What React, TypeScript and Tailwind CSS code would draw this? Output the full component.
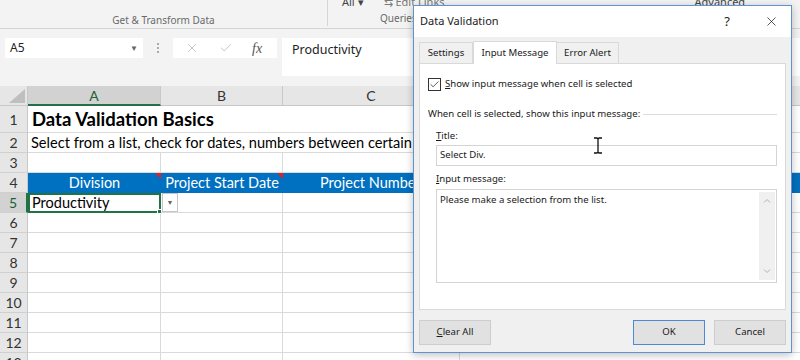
import { X, Check } from "lucide-react";

const ROWS = [1, 2, 3, 4, 5, 6, 7, 8, 9, 10, 11, 12, 13];
const rowH = (n: number) => (n === 1 ? "h-[27px]" : "h-[20px]");
const cellFont = "font-['Lato','Liberation_Sans',sans-serif]";
const ui = "font-['Noto_Sans','Liberation_Sans',sans-serif]";

function Ribbon() {
  return (
    <div className="relative h-[29px] bg-[#f3f3f3] border-b border-[#d4d4d4] flex">
      <div className="w-[328px] border-r border-[#d6d6d6] mb-[2px] flex justify-center pt-[14px]">
        <span className={`${ui} text-[10px] leading-[12px] text-[#6a6a6a]`}>Get &amp; Transform Data</span>
      </div>
      <div className="flex-1 flex flex-col pl-[14px]">
        <div className="flex items-start gap-[20px] h-[10px] -mt-[6px]">
          <span className={`${ui} text-[11px] text-[#444]`}>All ▾</span>
          <span className={`${ui} text-[11px] text-[#777]`}>⇆ Edit Links</span>
          <span className={`${ui} text-[11px] text-[#444] ml-[230px]`}>Advanced</span>
        </div>
        <span className={`${ui} text-[10px] leading-[12px] text-[#6a6a6a] ml-[38px] mt-[8px]`}>Queries &amp; Connections</span>
      </div>
    </div>
  );
}

function FormulaBar() {
  return (
    <div className="h-[57px] bg-[#f3f3f3] flex items-start pt-[9px] pl-[5px]">
      <div className="w-[138px] h-[20px] bg-white flex items-center justify-between px-[5px]">
        <span className={`${ui} text-[12px] text-[#222]`}>A5</span>
        <span className="text-[8px] text-[#666]">▼</span>
      </div>
      <div className="w-[30px] h-[20px] flex flex-col items-center justify-center gap-[2px]">
        <span className="w-[2px] h-[2px] bg-[#aaa]" />
        <span className="w-[2px] h-[2px] bg-[#aaa]" />
        <span className="w-[2px] h-[2px] bg-[#aaa]" />
      </div>
      <div className="w-[104px] h-[20px] bg-white flex items-center">
        <X size={14} strokeWidth={1.3} className="text-[#b3b3b3] ml-[12px]" />
        <Check size={14} strokeWidth={1.3} className="text-[#b3b3b3] ml-[20px]" />
        <span className="ml-[19px] font-['Liberation_Serif',serif] italic text-[14px] text-[#555]">fx</span>
      </div>
      <div className="ml-[5px] flex-1 h-[38px] bg-white pl-[10px] leading-[20px]">
        <span className={`${ui} text-[12.5px] text-[#222]`}>Productivity</span>
      </div>
    </div>
  );
}

function Sheet() {
  return (
    <div className={`${cellFont} grid grid-cols-[28px_133px_122px_177px_1fr]`}>
      {/* header row */}
      <div className="h-[20px] bg-[#e6e6e6] border-r border-b border-[#c8c8c8] relative overflow-hidden">
        <div className="absolute right-[2px] bottom-[2px] w-0 h-0 border-l-[16px] border-l-transparent border-b-[14px] border-b-[#bfbfbf]" />
      </div>
      <div className="h-[20px] bg-[#d2d2d2] border-r border-[#c8c8c8] border-b-2 border-b-[#217346] flex items-center justify-center text-[14px] text-[#1e5e3a]">A</div>
      <div className="h-[20px] bg-[#e6e6e6] border-r border-b border-[#c8c8c8] flex items-center justify-center text-[14px] text-[#333]">B</div>
      <div className="h-[20px] bg-[#e6e6e6] border-r border-b border-[#c8c8c8] flex items-center justify-center text-[14px] text-[#333]">C</div>
      <div className="h-[20px] bg-[#e6e6e6] border-b border-[#c8c8c8]" />

      {ROWS.map((r) => (
        <Row key={r} n={r} />
      ))}
    </div>
  );
}

function Row({ n }: { n: number }) {
  const h = rowH(n);
  const grid = "border-r border-b border-[#dadada]";
  const head = (
    <div
      className={`${h} ${n === 5 ? "bg-[#d2d2d2] border-r-2 border-r-[#217346] text-[#1e5e3a]" : "bg-[#e6e6e6] border-r border-[#c8c8c8] text-[#333]"} border-b border-b-[#d0d0d0] flex items-center justify-center text-[14px]`}
    >
      {n}
    </div>
  );
  if (n === 1)
    return (
      <>
        {head}
        <div className={`${h} col-span-2 border-b border-[#dadada] flex items-center pl-[4px] pt-[2px] font-bold text-[18.5px] text-black whitespace-nowrap`}>
          Data Validation Basics
        </div>
        <div className={`${h} ${grid}`} />
        <div className={`${h} border-b border-[#dadada]`} />
      </>
    );
  if (n === 2)
    return (
      <>
        {head}
        <div className={`${h} col-span-4 border-b border-[#dadada] flex items-center pl-[3px] text-[14.6px] text-black whitespace-nowrap`}>
          Select from a list, check for dates, numbers between certain values and more.
        </div>
      </>
    );
  if (n === 4)
    return (
      <>
        {head}
        <div className={`${h} bg-[#0070c0] relative flex items-center justify-center text-[14.5px] text-white`}>
          Division
          <span className="absolute right-0 top-0 w-0 h-0 border-l-[6px] border-l-transparent border-t-[6px] border-t-[#e0202a]" />
        </div>
        <div className={`${h} bg-[#0070c0] relative flex items-center justify-center text-[14.5px] text-white whitespace-nowrap`}>
          Project Start Date
          <span className="absolute right-0 top-0 w-0 h-0 border-l-[6px] border-l-transparent border-t-[6px] border-t-[#e0202a]" />
        </div>
        <div className={`${h} bg-[#0070c0] flex items-center pl-[37px] text-[14.5px] text-white whitespace-nowrap`}>Project Number</div>
        <div className={`${h} bg-[#0070c0]`} />
      </>
    );
  if (n === 5)
    return (
      <>
        {head}
        <div className={`${h} relative border-2 border-[#217346] flex items-center pl-[2px] text-[14.5px] text-black`}>
          Productivity
          <span className="absolute -right-[3px] -bottom-[3px] w-[5px] h-[5px] bg-[#217346] border border-white" />
        </div>
        <div className={`${h} ${grid} relative`}>
          <div className="absolute left-[1px] top-0 w-[16px] h-[19px] bg-white border border-[#c6c6c6] flex items-center justify-center text-[7px] text-[#666]">▼</div>
        </div>
        <div className={`${h} ${grid}`} />
        <div className={`${h} border-b border-[#dadada]`} />
      </>
    );
  return (
    <>
      {head}
      <div className={`${h} ${grid}`} />
      <div className={`${h} ${grid}`} />
      <div className={`${h} ${grid}`} />
      <div className={`${h} border-b border-[#dadada]`} />
    </>
  );
}

function Dialog() {
  return (
    <div className={`${ui} absolute left-[413px] top-[5px] w-[379px] h-[348px] bg-[#f0f0f0] border border-[#5e93d0] shadow-[0_2px_8px_rgba(0,0,0,0.25)] flex flex-col text-[9.6px] text-[#1a1a1a]`}>
      <div className="h-[31px] bg-white flex items-center pl-[6px] pr-[12px]">
        <span className="text-[11px] flex-1">Data Validation</span>
        <span className="text-[13px] mr-[34px] text-[#222]">?</span>
        <X size={15} strokeWidth={1.2} className="text-[#222]" />
      </div>
      <div className="flex items-end pl-[5px] pt-[4px] h-[26px]">
        <div className="w-[54px] h-[21px] flex items-center justify-center border border-b-0 border-[#d9d9d9] bg-[#f0f0f0]">Settings</div>
        <div className="w-[84px] h-[23px] flex items-center justify-center border border-b-0 border-[#d9d9d9] bg-white -mb-px relative z-10">Input Message</div>
        <div className="w-[62px] h-[21px] flex items-center justify-center border border-b-0 border-l-0 border-[#d9d9d9] bg-[#f0f0f0]">Error Alert</div>
      </div>
      <div className="mx-[5px] h-[247px] bg-white border border-[#d9d9d9] flex flex-col pl-[8px] pr-[8px]">
        <div className="flex items-center gap-[4px] mt-[13px]">
          <div className="w-[13px] h-[13px] border border-[#333] flex items-center justify-center">
            <Check size={11} strokeWidth={1.6} className="text-[#222]" />
          </div>
          <span>
            <span className="underline">S</span>how input message when cell is selected
          </span>
        </div>
        <div className="flex items-center mt-[16px]">
          <span>When cell is selected, show this input message:</span>
          <div className="flex-1 h-px bg-[#dcdcdc] ml-[3px]" />
        </div>
        <div className="pl-[8px] mt-[7px]">
          <span>
            <span className="underline">T</span>itle:
          </span>
          <div className="mt-[2px] h-[21px] border border-[#d4d4d4] flex items-center pl-[3px]">Select Div.</div>
          <div className="mt-[6px]">
            <span className="underline">I</span>nput message:
          </div>
          <div className="mt-[2px] h-[94px] border border-[#d4d4d4] flex">
            <div className="flex-1 pl-[3px] pt-[3px]">Please make a selection from the list.</div>
            <div className="w-[16px] my-[2px] mr-[1px] bg-[#f0f0f0] flex flex-col items-center justify-between py-[6px]">
              <svg width="8" height="5" viewBox="0 0 8 5"><path d="M1 4.5 4 1.5 7 4.5" fill="none" stroke="#b0b0b0" strokeWidth="1" /></svg>
              <svg width="8" height="5" viewBox="0 0 8 5"><path d="M1 0.5 4 3.5 7 0.5" fill="none" stroke="#b0b0b0" strokeWidth="1" /></svg>
            </div>
          </div>
        </div>
      </div>
      <div className="flex items-start px-[5px] mt-[10px]">
        <button className="w-[72px] h-[25px] bg-[#e1e1e1] border border-[#cdcdcd]">
          <span className="underline">C</span>lear All
        </button>
        <div className="flex-1" />
        <button className="w-[72px] h-[25px] bg-[#e1e1e1] border border-[#4a8ad6]">OK</button>
        <button className="w-[72px] h-[25px] bg-[#e1e1e1] border border-[#cdcdcd] ml-[9px]">Cancel</button>
      </div>
    </div>
  );
}

export default function App() {
  return (
    <div className="relative w-[800px] h-[360px] overflow-hidden bg-white">
      <Ribbon />
      <FormulaBar />
      <Sheet />
      <Dialog />
      {/* I-beam cursor */}
      <svg className="absolute left-[593px] top-[137px]" width="10" height="17" viewBox="0 0 10 17">
        <path d="M1 1h3l1 1 1-1h3M5 2v13M1 16h3l1-1 1 1h3" fill="none" stroke="#111" strokeWidth="1.3" />
      </svg>
    </div>
  );
}
